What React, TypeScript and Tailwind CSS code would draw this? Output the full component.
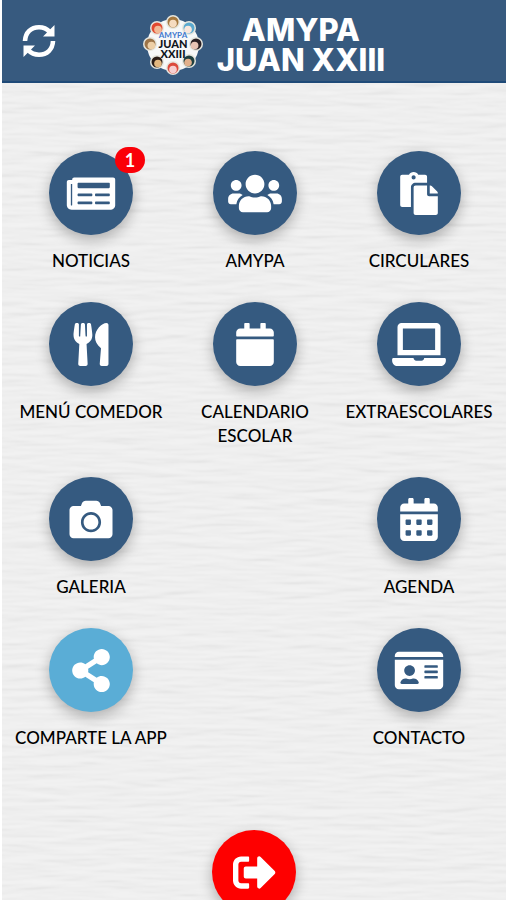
import type { IconType } from "react-icons";
import {
  FaCalendar,
  FaCalendarAlt,
  FaCamera,
  FaIdCard,
  FaLaptop,
  FaNewspaper,
  FaPaste,
  FaShareAlt,
  FaSignOutAlt,
  FaUsers,
  FaUtensils,
} from "react-icons/fa";

type MenuItem = {
  label: string;
  icon: IconType;
  column: string;
  color?: string;
  badge?: number;
};

const MENU_ITEMS: MenuItem[] = [
  { label: "NOTICIAS", icon: FaNewspaper, column: "col-start-1", badge: 1 },
  { label: "AMYPA", icon: FaUsers, column: "col-start-2" },
  { label: "CIRCULARES", icon: FaPaste, column: "col-start-3" },
  { label: "MENÚ COMEDOR", icon: FaUtensils, column: "col-start-1" },
  { label: "CALENDARIO ESCOLAR", icon: FaCalendar, column: "col-start-2" },
  { label: "EXTRAESCOLARES", icon: FaLaptop, column: "col-start-3" },
  { label: "GALERIA", icon: FaCamera, column: "col-start-1" },
  { label: "AGENDA", icon: FaCalendarAlt, column: "col-start-3" },
  { label: "COMPARTE LA APP", icon: FaShareAlt, column: "col-start-1", color: "bg-[#5aadd6]" },
  { label: "CONTACTO", icon: FaIdCard, column: "col-start-3" },
];

const LOGO_HEADS = [
  { x: 30, y: 7, hair: "#a5793f", face: "#f6dcc0" },
  { x: 46, y: 13, hair: "#5aa9cf", face: "#f8e6dc" },
  { x: 53, y: 29, hair: "#2b2024", face: "#e9c3b4" },
  { x: 46, y: 46, hair: "#1e3f3f", face: "#e2b08c" },
  { x: 30, y: 53, hair: "#dc4a3c", face: "#f7cfd0" },
  { x: 14, y: 47, hair: "#2a1c16", face: "#e3b77f" },
  { x: 7, y: 29, hair: "#9c7448", face: "#edcfa6" },
  { x: 14, y: 13, hair: "#e2492f", face: "#f2bb97" },
];

function Logo() {
  return (
    <svg aria-label="AMYPA Juan XXIII" className="size-[60px] shrink-0" role="img" viewBox="0 0 60 60">
      <circle cx="30" cy="30" fill="#f7f8f8" r="26" />
      {LOGO_HEADS.map((h) => (
        <g key={`${h.x}-${h.y}`}>
          <circle cx={h.x} cy={h.y} fill="#e6e6de" r="7" />
          <circle cx={h.x} cy={h.y} fill={h.hair} r="5.5" />
          <circle cx={h.x + (30 - h.x) * 0.06} cy={h.y + 1.5} fill={h.face} r="3.8" />
        </g>
      ))}
      <g className="font-[Lato,sans-serif]" textAnchor="middle">
        <text fill="#3f78cf" fontSize="8" fontWeight="700" x="30" y="23">AMYPA</text>
        <text fill="#10151c" fontSize="11" fontWeight="900" x="30" y="33">JUAN</text>
        <text fill="#10151c" fontSize="11" fontWeight="900" x="30" y="43">XXIII</text>
      </g>
    </svg>
  );
}

function RefreshIcon() {
  return (
    <svg aria-hidden="true" className="size-[34px]" viewBox="0 0 34 34">
      <g fill="none" stroke="currentColor" strokeWidth="4.6">
        <path d="M3 17C3.400 8.500 9 3.300 17 3.300c4.500 0 8 1.600 10.700 4.600" />
        <path d="M31 17C30.600 25.500 25 30.700 17 30.700c-4.500 0-8-1.600-10.700-4.600" />
      </g>
      <path d="M32.500 1V12.500H21ZM1.500 33V21.500H13Z" fill="currentColor" />
    </svg>
  );
}

// Embossed paper behind the menu
function PaperTexture() {
  return (
    <svg aria-hidden="true" className="pointer-events-none absolute inset-0 size-full">
      <filter height="100%" id="paper" width="100%" x="0" y="0">
        <feTurbulence baseFrequency="0.02 0.14" numOctaves="2" result="noise" seed="8" type="fractalNoise" />
        <feDiffuseLighting in="noise" lightingColor="#f2f2f2" surfaceScale="0.8">
          <feDistantLight azimuth="270" elevation="76" />
        </feDiffuseLighting>
      </filter>
      <rect filter="url(#paper)" height="100%" width="100%" />
    </svg>
  );
}

function MenuButton({ item }: { item: MenuItem }) {
  const Icon = item.icon;

  return (
    <button className={`flex flex-col items-center gap-[14px] self-start ${item.column}`} type="button">
      <span
        className={`relative flex size-[84px] items-center justify-center rounded-full text-white shadow-[0_5px_14px_rgba(0,0,0,0.28)] ${item.color ?? "bg-[#355a80]"}`}
      >
        <Icon aria-hidden="true" className="h-[43px] w-[54px]" />
        {item.badge ? (
          <span className="absolute -top-1 -right-3 flex h-[26px] w-[30px] items-center justify-center rounded-full bg-[#fa0008] text-lg font-bold">
            {item.badge}
          </span>
        ) : null}
      </span>
      <span className="text-[17px] leading-6 font-medium text-black">{item.label}</span>
    </button>
  );
}

export default function App() {
  return (
    <div className="flex h-screen flex-col overflow-hidden border-l-2 border-white bg-[#efefef] font-[Lato,sans-serif]">
      <header className="relative flex h-[83px] shrink-0 items-center justify-center border-b-2 border-[#1f4a78] bg-[#375a7f] text-white">
        <button aria-label="Actualizar" className="absolute left-5" type="button">
          <RefreshIcon />
        </button>
        <div className="flex items-center gap-[14px] pt-2 pl-5">
          <Logo />
          <h1 className="text-center font-[Inter,sans-serif] text-[31px] leading-[30px] font-extrabold">
            AMYPA
            <br />
            JUAN XXIII
          </h1>
        </div>
      </header>

      <main className="relative grow overflow-hidden">
        <PaperTexture />
        <div className="relative flex flex-col items-center gap-20 pt-[68px]">
          <nav className="grid w-full grid-cols-3 gap-y-[29px] pr-[5px] pl-[7px]">
            {MENU_ITEMS.map((item) => (
              <MenuButton item={item} key={item.label} />
            ))}
          </nav>
          <button
            aria-label="Salir"
            className="flex size-[84px] items-center justify-center rounded-full bg-[#fe0000] text-white shadow-[0_5px_14px_rgba(0,0,0,0.28)]"
            type="button"
          >
            <FaSignOutAlt aria-hidden="true" className="size-[43px]" />
          </button>
        </div>
      </main>
    </div>
  );
}
